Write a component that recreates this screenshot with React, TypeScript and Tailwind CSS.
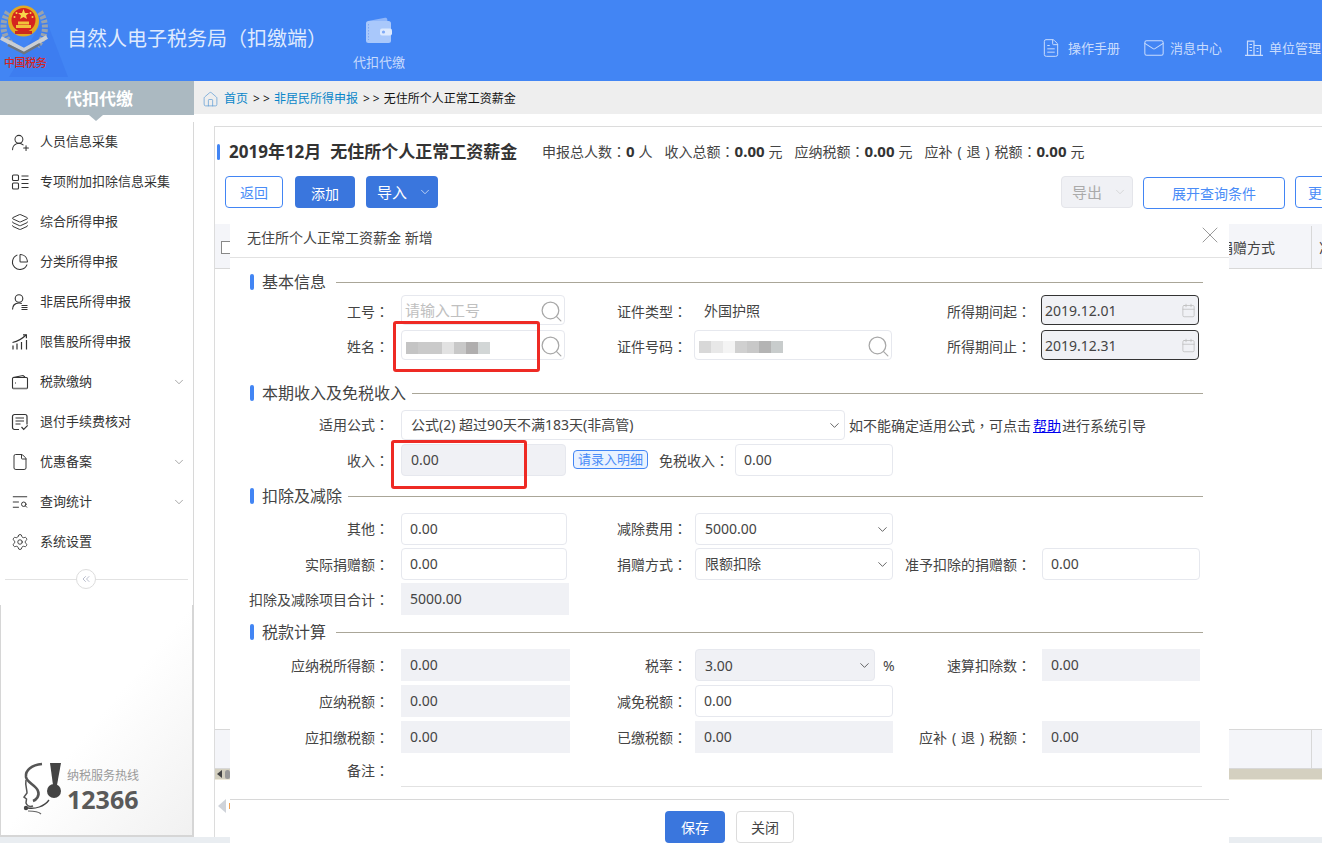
import type { ReactNode } from "react";
import {
  Calendar,
  ChartPie,
  ChevronDown,
  ChevronsLeft,
  File,
  FileText,
  House,
  Layers,
  Mail,
  Search,
  Settings,
  TextSearch,
  UserRoundPlus,
  X,
} from "lucide-react";

const L1 = "w-[159px] mr-[12px]";
const L3 = "w-[139px] mr-[10px]";

function Colon() {
  return <span className="font-['Noto_Sans_CJK_TC']">：</span>;
}

// the brackets sit in the middle of a full cell in the picture
function RefundLabel() {
  return (
    <>
      应补<span className="inline-block w-[14px] text-center">(</span>退<span className="inline-block w-[14px] text-center">)</span>税额
    </>
  );
}

function Label({ className, children }: { className: string; children: ReactNode }) {
  return (
    <div className={`${className} shrink-0 text-right text-[14px] leading-[20px] text-[#444] whitespace-nowrap`}>
      {children}
      <Colon />
    </div>
  );
}

function Field({ className, children }: { className: string; children?: ReactNode }) {
  return (
    <div className={`${className} shrink-0 h-full flex items-center pl-[8px] pb-[1px] text-[14px] text-[#444] border border-[#e6e8ee] rounded-[4px] bg-white`}>
      {children}
    </div>
  );
}

function ReadOnly({ className, children }: { className: string; children?: ReactNode }) {
  return (
    <div className={`${className} shrink-0 h-full flex items-center pl-[9px] pb-[1px] text-[14px] text-[#444] bg-[#f0f1f5]`}>
      {children}
    </div>
  );
}

function SelectBox({ className, children }: { className: string; children: ReactNode }) {
  return (
    <div className={`${className} shrink-0 h-full flex items-center justify-between pl-[9px] pr-[2px] text-[14px] text-[#444] border border-[#e6e8ee] rounded-[4px]`}>
      <span className="pb-[1px]">{children}</span>
      <ChevronDown size={15} strokeWidth={1.2} className="text-[#333]" />
    </div>
  );
}

function SearchBox({ children }: { children?: ReactNode }) {
  return (
    <>
      {children}
      <Search size={25} strokeWidth={1.2} className="ml-auto mt-[3px] text-[#a8a8a8]" />
    </>
  );
}

function DateBox({ value }: { value: string }) {
  return (
    <div className="w-[158px] shrink-0 h-full flex items-center justify-between pl-[3px] pr-[2px] text-[14px] text-[#444] border border-[#333] rounded-[4px] bg-[#f0f1f5]">
      <span className="pt-[1px]">{value}</span>
      <Calendar size={15} strokeWidth={1.2} className="text-[#bbb]" />
    </div>
  );
}

function Section({ title, className, lineGap }: { title: string; className: string; lineGap: string }) {
  return (
    <div className={`${className} flex items-center h-[16px] ml-[20px] mr-[26px]`}>
      <div className="w-[4px] h-[16px] rounded-[2px] bg-[#4285f4] shrink-0" />
      <div className="ml-[8px] text-[16px] leading-[16px] text-[#444] whitespace-nowrap">{title}</div>
      <div className={`${lineGap} flex-1 h-px bg-[#aaa698]`} />
    </div>
  );
}

function Mosaic({ blocks, className }: { blocks: string[]; className: string }) {
  return (
    <div className={`${className} flex h-[12px]`}>
      {blocks.map((b, i) => (
        <div key={i} className={`${b} w-[12px] h-full`} />
      ))}
    </div>
  );
}

const nameBlocks = ["bg-[#c4c4c4]", "bg-[#cacaca]", "bg-[#cacaca]", "bg-[#e2e2e2]", "bg-[#c8c8c8]", "bg-[#b0aeae]", "bg-[#d2d6d6]"];
const certBlocks = ["bg-[#d8d8d8]", "bg-[#e8e8e8]", "bg-[#f4f4f4]", "bg-[#d0d0d0]", "bg-[#c8c8c8]", "bg-[#b4b4b4]", "bg-[#c8cccc]"];

function TwoBoxesIcon() {
  return (
    <svg width="18" height="18" viewBox="0 0 18 18" fill="none" stroke="#333" strokeWidth="1.1">
      <rect x="1.5" y="2" width="6" height="5.5" rx="1" />
      <rect x="1.5" y="10" width="6" height="6" rx="1" />
      <path d="M10.5 3h7M10.5 6.5h7M10.5 10.5h7M10.5 14.5h7" />
    </svg>
  );
}

function PersonLinesIcon() {
  return (
    <svg width="18" height="18" viewBox="0 0 18 18" fill="none" stroke="#333" strokeWidth="1.1">
      <circle cx="8" cy="5.5" r="3.8" />
      <path d="M1.5 16.5c0-4 2.5-6.5 6.5-6.5 1 0 2 .2 2.8.6" />
      <path d="M10.5 12.5h6M10.5 14.5h6M10.5 16.5h6" />
    </svg>
  );
}

function BarsIcon() {
  return (
    <svg width="18" height="18" viewBox="0 0 18 18" fill="none" stroke="#333" strokeWidth="1.2">
      <path d="M2 16.5v-4M6 16.5v-6M10.5 16.5V9M15.5 16.5V7" />
      <path d="M1.5 9.5C6 8.5 10.5 6.5 15 2" />
      <path d="M12 1.8h3.4v3.4" />
    </svg>
  );
}

function PurseIcon() {
  return (
    <svg width="18" height="18" viewBox="0 0 18 18" fill="none" stroke="#333" strokeWidth="1.1">
      <path d="M2 4.5 12 2.5l2 1.5" />
      <rect x="1.5" y="4.5" width="15" height="11" rx="1" />
      <path d="M4 10h1" />
      <path d="M2 15.5h14" strokeWidth="1.6" stroke="#777" />
    </svg>
  );
}

function NoteCheckIcon() {
  return (
    <svg width="18" height="18" viewBox="0 0 18 18" fill="none" stroke="#333" strokeWidth="1.2">
      <path d="M8 16.5H3.5a2 2 0 0 1-2-2v-11a2 2 0 0 1 2-2H14a2 2 0 0 1 2 2v8" />
      <path d="M4.5 5H13M4.5 8H13M4.5 11h5" />
      <path d="m10.5 14 2.2 2.4 4-4" />
    </svg>
  );
}

function HeaderBuildingIcon() {
  return (
    <svg width="18" height="16" viewBox="0 0 18 16" fill="none" stroke="#c9dcfd" strokeWidth="1.2">
      <path d="M2.5 15V1.2H9V15M9 5.5h6.5V15M0 15.4h18" />
      <path d="M4.5 4.5H7M4.5 7.5H7M4.5 10.5H7M11.5 8.5h2M11.5 11.5h2" />
    </svg>
  );
}

function WalletArt() {
  return (
    <svg width="28" height="27" viewBox="0 0 28 27" fill="none">
      <path d="M3 4 20 .8c1.2-.2 2 .4 2.2 1.4L22.6 5H3z" fill="#8fb6f9" />
      <rect x="1" y="4" width="25" height="22" rx="2.5" fill="#a9c8fb" />
      <path d="M3.5 7v16" stroke="#7ea9f6" strokeWidth="1" strokeDasharray="1.5 1.5" />
      <rect x="15" y="11.5" width="12" height="7" rx="2" fill="#dce9fe" />
      <circle cx="18.5" cy="15" r="1.6" fill="#7ea9f6" />
    </svg>
  );
}

function Emblem() {
  return (
    <svg width="70" height="78" viewBox="0 0 70 78" className="shrink-0">
      <polygon points="9,77 68,77 45,17" fill="#3d7df0" />
      <path d="M8 12C0 24 3 38 14 46" fill="none" stroke="#9aa3ad" strokeWidth="6" strokeDasharray="3 1.5" />
      <path d="M40 12c7 10 7 24-3 34" fill="none" stroke="#9aa3ad" strokeWidth="6" strokeDasharray="3 1.5" />
      <path d="M1 38 24 50l23-13" fill="none" stroke="#c9ced4" strokeWidth="4" />
      <path d="M8 45 24 53l16-9" fill="none" stroke="#6e757d" strokeWidth="2.5" />
      <circle cx="23.5" cy="21" r="15.5" fill="#e2a922" />
      <circle cx="23.5" cy="20" r="12" fill="#d5231f" />
      <polygon points="23.5,9 25,13 29,13 26,15.5 27,19 23.5,17 20,19 21,15.5 18,13 22,13" fill="#f7d64a" />
      <circle cx="16.5" cy="13" r="1" fill="#f7d64a" />
      <circle cx="30.5" cy="13" r="1" fill="#f7d64a" />
      <circle cx="14.5" cy="17" r="1" fill="#f7d64a" />
      <circle cx="32.5" cy="17" r="1" fill="#f7d64a" />
      <path d="M16 25h15v3H16zM18 21.5h11v3H18z" fill="#f2c23a" />
      <path d="M15 31h17v3H15z" fill="#c92a20" />
      <text x="4" y="67" fontSize="11" fontWeight="500" fill="#d4261f" fontFamily="'Noto Sans CJK SC', sans-serif" letterSpacing="-0.4">
        中国税务
      </text>
    </svg>
  );
}

function HotlineArt() {
  return (
    <svg width="46" height="58" viewBox="0 0 46 58" fill="none">
      <polygon points="30,5 41,5 37,27 33,27" fill="#444" />
      <circle cx="34" cy="33" r="7" fill="#444" />
      <path d="M22 6C12 7 5 12 6 19c1 6 10 8 12 14 2 5-2 9-5 10" stroke="#555" strokeWidth="2.6" />
      <path d="M6 22c-1 5 1 9 1 13l-3 4 2.5 2-.5 4c1 3 4 4 7 3" stroke="#555" strokeWidth="1.5" />
      <path d="M29 42c-5 7-14 9-21 8" stroke="#444" strokeWidth="1.3" />
      <circle cx="6" cy="50" r="2.2" fill="#444" />
      <path d="M8 53c5 0 10 0 13 3" stroke="#666" strokeWidth="1.2" />
    </svg>
  );
}

const menu: { icon: ReactNode; label: string; arrow?: boolean }[] = [
  { icon: <UserRoundPlus size={19} strokeWidth={1.3} />, label: "人员信息采集" },
  { icon: <TwoBoxesIcon />, label: "专项附加扣除信息采集" },
  { icon: <Layers size={18} strokeWidth={1.3} />, label: "综合所得申报" },
  { icon: <ChartPie size={18} strokeWidth={1.4} />, label: "分类所得申报" },
  { icon: <PersonLinesIcon />, label: "非居民所得申报" },
  { icon: <BarsIcon />, label: "限售股所得申报" },
  { icon: <PurseIcon />, label: "税款缴纳", arrow: true },
  { icon: <NoteCheckIcon />, label: "退付手续费核对" },
  { icon: <File size={18} strokeWidth={1.3} />, label: "优惠备案", arrow: true },
  { icon: <TextSearch size={18} strokeWidth={1.3} />, label: "查询统计", arrow: true },
  { icon: <Settings size={18} strokeWidth={1.2} />, label: "系统设置" },
];

function Sidebar() {
  return (
    <aside className="w-[194px] shrink-0 flex flex-col">
      <div className="relative h-[34px] shrink-0 bg-[#abb9c1] flex items-center justify-center pl-[4px] pt-[2px] text-[17px] font-bold text-white">
        代扣代缴
        <div className="absolute left-[89px] top-[34px] w-0 h-0 border-x-[7px] border-x-transparent border-t-[6px] border-t-[#abb9c1]" />
      </div>
      <div className="mt-[7px] h-[483px] shrink-0 border-r border-[#d8d8d8]">
        {menu.map((m) => (
          <div key={m.label} className="h-[40px] flex items-center text-[13px] text-[#333]">
            <div className="w-[40px] pl-[11px] shrink-0 flex items-center text-[#333]">{m.icon}</div>
            <span>{m.label}</span>
            {m.arrow && <ChevronDown size={14} strokeWidth={1.1} className="ml-auto mr-[7px] text-[#777]" />}
          </div>
        ))}
        <div className="relative mt-[17px] mx-[5px] h-px bg-[#e2e2e2]">
          <div className="absolute left-[71px] top-[-10px] w-[20px] h-[20px] rounded-full border border-[#ddd] bg-white flex items-center justify-center">
            <ChevronsLeft size={12} strokeWidth={1.2} className="text-[#8d93ad]" />
          </div>
        </div>
      </div>
      <div className="flex-1 border-l border-r-2 border-b-2 border-[#d6d6d6] bg-linear-to-br from-white via-white to-[#f1f1f1] flex items-end pl-[19px] pb-[19px]">
        <HotlineArt />
        <div className="ml-[1px] mb-[3px]">
          <div className="text-[12px] leading-[15px] text-[#9a9a9a] mb-[2px]">纳税服务热线</div>
          <div className="font-['Open_Sans'] text-[25px] leading-[28px] font-bold text-[#595959]">12366</div>
        </div>
      </div>
      <div className="h-[6px] shrink-0 bg-[#e9edf1]" />
    </aside>
  );
}

function Stat({ label, value, unit }: { label: ReactNode; value: string; unit: string }) {
  return (
    <div className="flex items-center whitespace-nowrap text-[14px] text-[#444]">
      <span>{label}</span>
      <Colon />
      <span className="text-[15px] font-bold text-[#333]">{value}</span>
      <span className="ml-[4px]">{unit}</span>
    </div>
  );
}

function MainPanel() {
  return (
    <section className="flex-1 ml-[20px] mt-[12px] border-l border-t border-[#dcdcdc] flex flex-col overflow-hidden min-h-0">
      <div className="h-[49px] shrink-0 flex items-center pl-[2px]">
        <div className="w-[3px] h-[16px] rounded-[2px] bg-[#4285f4]" />
        <h1 className="ml-[9px] w-[313px] shrink-0 text-[17px] font-bold text-[#333] whitespace-nowrap">
          2019年12月<span className="ml-[9px]">无住所个人正常工资薪金</span>
        </h1>
        <div className="flex gap-[12px]">
          <Stat label="申报总人数" value="0" unit="人" />
          <Stat label="收入总额" value="0.00" unit="元" />
          <Stat label="应纳税额" value="0.00" unit="元" />
          <Stat label={<RefundLabel />} value="0.00" unit="元" />
        </div>
      </div>
      <div className="h-[33px] shrink-0 flex items-start pl-[10px]">
        <button className="w-[58px] h-[32px] shrink-0 rounded-[4px] border border-[#4285f4] text-[14px] text-[#4a8cf7] bg-white">返回</button>
        <button className="ml-[12px] w-[60px] h-[32px] shrink-0 rounded-[4px] bg-[#3a76dd] text-[14px] text-white pt-[2px]">添加</button>
        <button className="ml-[11px] w-[72px] h-[32px] shrink-0 rounded-[4px] bg-[#3a76dd] text-[15px] text-white flex items-center pl-[11px]">
          导入
          <ChevronDown size={14} strokeWidth={1.1} className="ml-[11px]" />
        </button>
        <button className="ml-[623px] w-[72px] h-[32px] shrink-0 rounded-[4px] border border-[#e4e5ea] bg-[#f0f1f5] text-[15px] text-[#aaa] flex items-center pl-[10px]">
          导出
          <ChevronDown size={14} strokeWidth={1} className="ml-[11px] text-[#c4c4c4]" />
        </button>
        <button className="ml-[10px] mt-[1px] w-[142px] h-[32px] shrink-0 rounded-[4px] border border-[#4285f4] text-[14px] text-[#4a8cf7] bg-white">展开查询条件</button>
        <button className="ml-[10px] w-[90px] h-[32px] shrink-0 rounded-[4px] border border-[#4285f4] text-[14px] text-[#4a8cf7] bg-white text-left pl-[12px]">更多</button>
      </div>
      <div className="mt-[15px] h-[45px] shrink-0 flex items-center pl-[6px] pt-[2px] bg-[#f4f5f9] border-b border-[#d8d8d8] text-[14px] text-[#444] whitespace-nowrap">
        <div className="w-[13px] h-[13px] shrink-0 border border-[#888] bg-white" />
        <span className="ml-[985px] shrink-0">捐赠方式</span>
        <div className="ml-[36px] w-px h-full shrink-0 bg-[#d8d8d8]" />
        <span className="ml-[7px] shrink-0">准予扣除的捐赠额</span>
      </div>
      <div className="flex-1 min-h-0" />
      <div className="h-[40px] shrink-0 flex bg-[#f4f5f9] border-y border-[#d8d8d8]">
        <div className="ml-[1096px] w-px h-full bg-[#d8d8d8]" />
      </div>
      <div className="h-[11px] shrink-0 flex items-center bg-[#d4d0c0] border-b border-[#eeeadb] pl-[2px]">
        <div className="w-0 h-0 border-y-[4px] border-y-transparent border-r-[5px] border-r-[#444]" />
        <div className="ml-[3px] w-[5px] h-[9px] rounded-full bg-[#999]" />
      </div>
      <div className="h-[57px] shrink-0 flex items-center pl-[3px] pb-[6px]">
        <div className="w-0 h-0 border-y-[7px] border-y-transparent border-r-[8px] border-r-[#cfd3da]" />
        <div className="ml-[3px] w-[2px] h-[6px] bg-[#f0a050]" />
      </div>
    </section>
  );
}

function RedMark({ className }: { className: string }) {
  return <div className={`${className} absolute border-[3px] border-[#ee2a24] rounded-[3px] pointer-events-none`} />;
}

function Modal() {
  return (
    <div className="absolute left-[230px] top-[224px] w-[999px] h-[619px] bg-white overflow-hidden">
      <div className="relative h-[34px] border-b border-[#e2e2e2] flex items-center pl-[17px] pb-[6px] text-[14px] text-[#444]">
        无住所个人正常工资薪金 新增
        <X size={28} strokeWidth={0.85} className="absolute right-[5px] top-[-3px] text-[#999]" />
      </div>

      <Section title="基本信息" className="mt-[16px]" lineGap="ml-[10px]" />
      <div className="mt-[5px] h-[30px] flex items-center">
        <Label className={`${L1} pt-[2px]`}>工号</Label>
        <Field className="w-[164px] !pl-[3px] !pb-0">
          <SearchBox>
            <span className="text-[15px] text-[#c0c0c0]">请输入工号</span>
          </SearchBox>
        </Field>
        <Label className="w-[122px] mr-[8px] pt-[2px]">证件类型</Label>
        <div className="w-[197px] shrink-0 pl-[9px] text-[14px] text-[#444]">外国护照</div>
        <Label className={`${L3} pt-[2px]`}>所得期间起</Label>
        <DateBox value="2019.12.01" />
      </div>
      <div className="mt-[5px] h-[30px] flex items-center">
        <Label className={`${L1} pt-[2px]`}>姓名</Label>
        <Field className="w-[164px] !pl-[4px] !pb-0">
          <SearchBox>
            <Mosaic blocks={nameBlocks} className="mt-[5px]" />
          </SearchBox>
        </Field>
        <Label className="w-[122px] mr-[7px] pt-[2px]">证件号码</Label>
        <Field className="w-[198px] !pl-[4px] !pb-0">
          <SearchBox>
            <Mosaic blocks={certBlocks} className="mt-[3px]" />
          </SearchBox>
        </Field>
        <Label className={`${L3} pt-[2px]`}>所得期间止</Label>
        <DateBox value="2019.12.31" />
      </div>

      <Section title="本期收入及免税收入" className="mt-[25px]" lineGap="ml-[6px]" />
      <div className="mt-[9px] h-[30px] flex items-center">
        <Label className={`${L1} pb-[2px]`}>适用公式</Label>
        <SelectBox className="w-[444px]">公式(2) 超过90天不满183天(非高管)</SelectBox>
        <div className="ml-[4px] text-[14px] text-[#444] whitespace-nowrap">
          如不能确定适用公式<span className="font-['Noto_Sans_CJK_TC']">，</span>可点击<a className="ml-[2px] text-[#0000ee] underline">帮助</a><span className="ml-[1px]">进行系统引导</span>
        </div>
      </div>
      <div className="mt-[4px] h-[32px] flex items-center">
        <Label className={L1}>收入</Label>
        <ReadOnly className="w-[165px] border border-[#e6e8ee] rounded-[4px]">0.00</ReadOnly>
        <button className="ml-[7px] mb-[1px] w-[75px] h-[19px] shrink-0 rounded-[4px] border border-[#4285f4] bg-[#e9f2ff] text-[13px] leading-[17px] text-[#4a8cf7]">请录入明细</button>
        <Label className="w-[81px] mr-[6px]">免税收入</Label>
        <Field className="w-[158px]">0.00</Field>
      </div>

      <Section title="扣除及减除" className="mt-[12px]" lineGap="ml-[6px]" />
      <div className="mt-[9px] h-[32px] flex items-center">
        <Label className={`${L1} pb-[2px]`}>其他</Label>
        <Field className="w-[166px]">0.00</Field>
        <Label className="w-[120px] mr-[8px] pb-[2px]">减除费用</Label>
        <SelectBox className="w-[198px]">5000.00</SelectBox>
      </div>
      <div className="mt-[3px] h-[32px] flex items-center">
        <Label className={L1}>实际捐赠额</Label>
        <Field className="w-[166px]">0.00</Field>
        <Label className="w-[120px] mr-[8px]">捐赠方式</Label>
        <SelectBox className="w-[198px]">限额扣除</SelectBox>
        <Label className="w-[138px] mr-[11px]">准予扣除的捐赠额</Label>
        <Field className="w-[158px]">0.00</Field>
      </div>
      <div className="mt-[3px] h-[32px] flex items-center">
        <Label className={L1}>扣除及减除项目合计</Label>
        <ReadOnly className="w-[168px]">5000.00</ReadOnly>
      </div>

      <Section title="税款计算" className="mt-[9px]" lineGap="ml-[10px]" />
      <div className="mt-[9px] h-[32px] flex items-center">
        <Label className={L1}>应纳税所得额</Label>
        <ReadOnly className="w-[169px]">0.00</ReadOnly>
        <Label className="w-[117px] mr-[8px]">税率</Label>
        <div className="w-[180px] shrink-0 h-full flex items-center justify-between pl-[9px] pr-[2px] text-[14px] text-[#444] border border-[#e6e8ee] rounded-[4px] bg-[#f0f1f5]">
          <span>3.00</span>
          <ChevronDown size={15} strokeWidth={1.2} className="text-[#333]" />
        </div>
        <span className="ml-[8px] w-[17px] shrink-0 text-[14px] text-[#444]">%</span>
        <Label className="w-[131px] mr-[11px]">速算扣除数</Label>
        <ReadOnly className="w-[158px]">0.00</ReadOnly>
      </div>
      <div className="mt-[4px] h-[32px] flex items-center">
        <Label className={L1}>应纳税额</Label>
        <ReadOnly className="w-[169px]">0.00</ReadOnly>
        <Label className="w-[117px] mr-[8px]">减免税额</Label>
        <Field className="w-[198px]">0.00</Field>
      </div>
      <div className="mt-[4px] h-[32px] flex items-center">
        <Label className={L1}>应扣缴税额</Label>
        <ReadOnly className="w-[169px]">0.00</ReadOnly>
        <Label className="w-[117px] mr-[8px]">已缴税额</Label>
        <ReadOnly className="w-[198px]">0.00</ReadOnly>
        <Label className="w-[138px] mr-[11px]">
          <RefundLabel />
        </Label>
        <ReadOnly className="w-[158px]">0.00</ReadOnly>
      </div>
      <div className="mt-[1px] h-[33px] flex items-center">
        <Label className={L1}>备注</Label>
        <div className="w-[801px] shrink-0 h-full border-b border-[#e2e2e2]" />
      </div>

      <div className="mt-[12px] pt-[11px] border-t border-[#d8d8d8] flex justify-center gap-[11px]">
        <button className="w-[60px] h-[32px] rounded-[4px] bg-[#3a76dd] text-[14px] text-white">保存</button>
        <button className="w-[58px] h-[32px] rounded-[4px] border border-[#dcdcdc] text-[14px] text-[#444] bg-white">关闭</button>
      </div>

      <RedMark className="left-[163px] top-[97px] w-[147px] h-[51px]" />
      <RedMark className="left-[161px] top-[216px] w-[136px] h-[49px]" />
    </div>
  );
}

export default function App() {
  return (
    <div className="relative w-[1322px] h-[843px] overflow-hidden bg-white flex flex-col font-['Noto_Sans','Noto_Sans_CJK_SC',sans-serif]">
      <header className="h-[81px] shrink-0 bg-[#4285f4] flex">
        <Emblem />
        <div className="w-[283px] shrink-0 pt-[25px] text-[20px] leading-[28px] text-[#dfeafe] whitespace-nowrap overflow-visible">
          <span className="ml-[-3px]">自然人电子税务局（扣缴端）</span>
        </div>
        <div className="w-[52px] shrink-0 flex flex-col items-center pt-[17px] text-[13px] text-[#c9dcfd]">
          <WalletArt />
          <div className="mt-[9px] whitespace-nowrap leading-[18px]">代扣代缴</div>
        </div>
        <div className="ml-auto flex items-start pt-[38px] text-[13px] leading-[20px] text-[#c9dcfd] whitespace-nowrap">
          <FileText size={20} strokeWidth={1.2} />
          <span className="ml-[7px]">操作手册</span>
          <Mail size={22} strokeWidth={1.1} className="ml-[23px] -mt-px" />
          <span className="ml-[5px]">消息中心</span>
          <div className="ml-[23px] mt-[2px]">
            <HeaderBuildingIcon />
          </div>
          <span className="ml-[6px] w-[53px]">单位管理</span>
        </div>
      </header>
      <div className="flex-1 min-h-0 flex">
        <Sidebar />
        <main className="flex-1 min-w-0 flex flex-col">
          <div className="h-[33px] shrink-0 bg-[#eeeeee] flex items-center pl-[8px] pt-[3px] text-[12px] whitespace-nowrap text-[#111]">
            <House size={17} strokeWidth={1} className="text-[#5b9bd5]" />
            <span className="ml-[5px] text-[#0a86c9]">首页</span>
            <span className="ml-[5px] mr-[4px]">&gt; &gt;</span>
            <span className="text-[#0a86c9]">非居民所得申报</span>
            <span className="ml-[5px] mr-[4px]">&gt; &gt;</span>
            <span>无住所个人正常工资薪金</span>
          </div>
          <MainPanel />
          <div className="h-[6px] shrink-0 bg-[#e9edf1]" />
        </main>
      </div>
      <Modal />
    </div>
  );
}
